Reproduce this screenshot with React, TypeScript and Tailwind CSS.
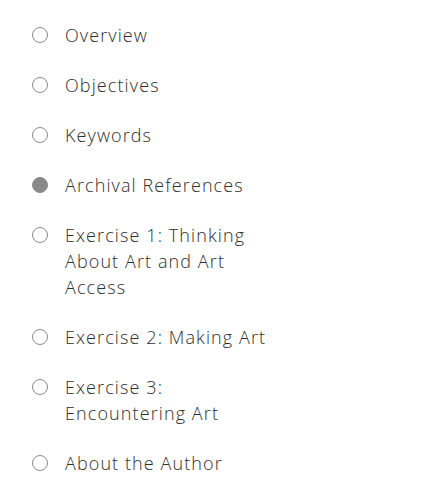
const items = [
  { label: 'Overview' },
  { label: 'Objectives' },
  { label: 'Keywords' },
  { label: 'Archival References', active: true },
  { label: 'Exercise 1: Thinking About Art and Art Access' },
  { label: 'Exercise 2: Making Art' },
  { label: 'Exercise 3: Encountering Art' },
  { label: 'About the Author' },
];

export default function App() {
  return (
    <div className="min-h-screen bg-white pt-[22px] pl-[32px] font-['Open_Sans',sans-serif]">
      <ul className="flex flex-col gap-[24px]">
        {items.map((item) => (
          <li key={item.label} className="flex items-start gap-[17px]">
            <span
              className={`mt-[5px] h-[16px] w-[16px] shrink-0 rounded-full border-[1.5px] border-[#8a8a8a] ${
                item.active ? 'bg-[#8a8a8a]' : 'bg-white'
              }`}
            />
            <span className="w-[210px] text-[18px] font-light leading-[26px] tracking-[1.1px] text-[#2e2e2e]">
              {item.label}
            </span>
          </li>
        ))}
      </ul>
    </div>
  );
}
